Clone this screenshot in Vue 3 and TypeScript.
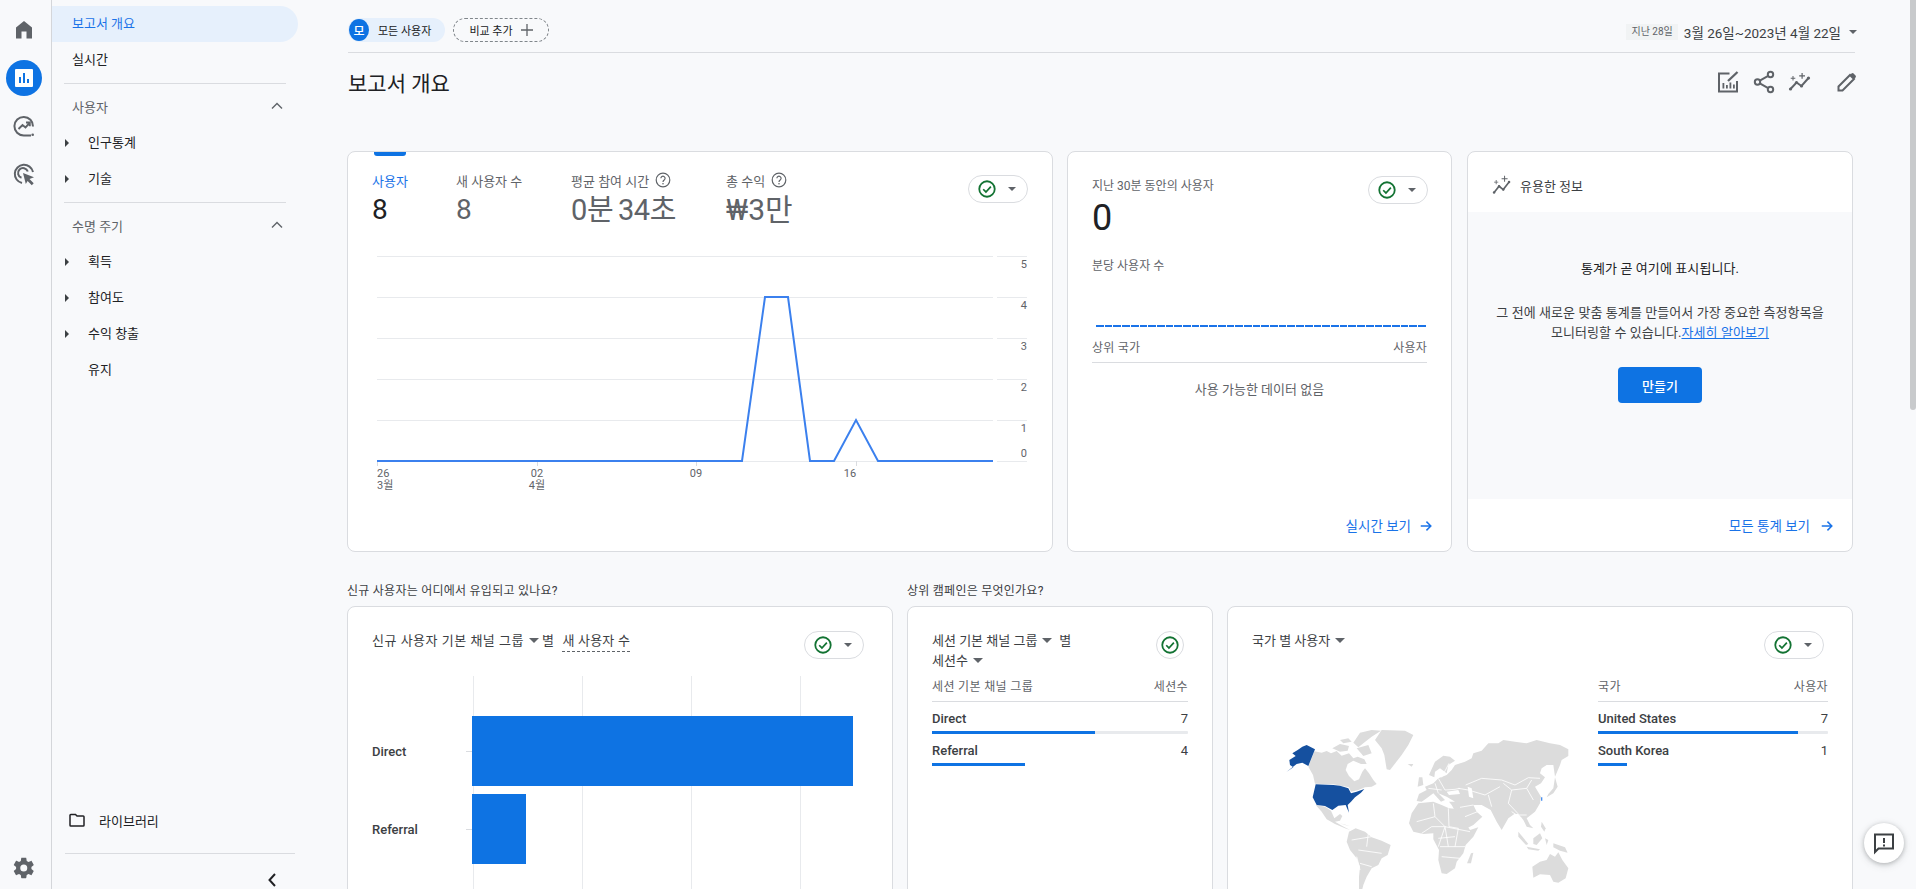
<script setup lang="ts">
const navA = ['인구통계', '기술']
const navB = ['획득', '참여도', '수익 창출']
const metrics = [
  { label: '사용자', value: '8', help: false, w: 84 },
  { label: '새 사용자 수', value: '8', help: false, w: 115 },
  { label: '평균 참여 시간', value: '0분 34초', help: true, w: 155 },
  { label: '총 수익', value: '₩3만', help: true, w: 100 },
]
const yLabels = [
  { t: '5', y: 12 }, { t: '4', y: 53 }, { t: '3', y: 94 }, { t: '2', y: 135 }, { t: '1', y: 176 }, { t: '0', y: 201 },
]
const grid = [0.5, 41.5, 82.5, 123.5, 164.5, 205.5]
const ticks = [1, 161, 320, 480]
const gridX = [124.5, 233.5, 342.5, 451.5]
const dashes = Array.from({ length: 38 }, (_, i) => i)
const chartBars = [
  { label: 'Direct', w: 381 },
  { label: 'Referral', w: 54 },
]
const sessionRows = [
  { label: 'Direct', value: 7, w: 163 },
  { label: 'Referral', value: 4, w: 93 },
]
const geoRows = [
  { label: 'United States', value: 7, w: 200 },
  { label: 'South Korea', value: 1, w: 29 },
]
const landPaths = [
  'M470 120 L540 122 L565 135 L550 165 L530 195 L495 240 L485 238 L478 195 L470 175 L450 150 Z',
  'M268 184 L290 188 L305 183 L318 190 L335 183 L350 197 L372 190 L385 205 L398 200 L418 208 L425 222 L408 222 L385 212 L368 222 L362 240 L372 258 L388 274 L402 268 L412 245 L420 235 L432 250 L445 270 L455 282 L440 290 L420 292 L400 300 L378 305 L372 292 L325 283 L270 281 L264 255 L250 230 Z',
  'M322 175 L345 162 L372 168 L368 182 L345 185 Z',
  'M345 150 L370 145 L380 155 L355 160 Z',
  'M385 158 L405 128 L440 120 L468 122 L440 140 L415 160 L400 172 Z',
  'M395 175 L430 165 L440 190 L415 198 Z',
  'M345 400 L375 408 L360 405 Z',
  'M272 345 L300 350 L318 362 L328 385 L345 372 L352 378 L345 392 L330 395 L352 408 L375 420 L360 415 L330 402 L305 388 L290 365 Z',
  'M372 425 L392 415 L420 425 L440 442 L470 452 L497 465 L488 495 L470 505 L460 525 L440 535 L425 560 L415 585 L412 597 L402 597 L402 560 L405 530 L395 505 L375 480 L365 455 Z',
  'M612 255 L630 215 L655 197 L675 200 L690 212 L670 225 L665 250 L645 235 L630 245 L628 262 Z',
  'M690 225 L720 215 L740 205 L745 190 L770 182 L790 160 L820 160 L835 150 L870 155 L905 160 L935 150 L975 160 L1005 165 L1030 178 L1030 198 L1010 210 L1005 225 L990 260 L985 225 L965 225 L950 235 L945 250 L960 262 L948 280 L930 290 L948 320 L945 340 L930 365 L905 385 L915 405 L925 415 L905 410 L895 390 L880 372 L868 372 L850 385 L830 420 L815 395 L797 360 L770 345 L745 345 L755 365 L772 380 L745 405 L720 418 L700 380 L680 345 L672 335 L690 335 L665 320 L640 310 L660 330 L648 335 L625 310 L605 325 L590 335 L575 333 L582 312 L605 300 L600 290 L625 280 L640 265 L665 255 L680 240 Z',
  'M582 262 L592 262 L595 285 L578 290 Z',
  'M548 222 L565 222 L560 230 Z',
  'M990 262 L998 290 L985 310 L965 322 L970 312 L985 295 Z',
  'M580 340 L625 335 L650 345 L672 355 L705 358 L712 385 L735 420 L760 412 L745 440 L722 465 L715 490 L695 515 L690 535 L665 552 L650 550 L640 510 L642 480 L625 448 L625 430 L595 432 L565 425 L552 400 L560 370 Z',
  'M738 490 L745 488 L738 520 L726 520 Z',
  'M922 530 L945 515 L965 510 L975 492 L990 500 L1000 487 L1012 510 L1030 535 L1022 565 L1000 578 L985 575 L975 555 L945 553 L925 563 Z',
  'M880 425 L910 462 L903 465 L880 440 Z',
  'M925 445 L945 430 L952 445 L935 465 L925 462 Z',
  'M905 470 L945 478 L940 482 L910 478 Z',
  'M985 460 L1020 472 L1028 488 L1005 482 L985 472 Z',
  'M950 395 L962 415 L958 425 L948 410 Z',
  'M960 445 L970 450 L965 465 Z',
]
const water = [
  'M665 305 L700 300 L705 312 L672 315 Z',
  'M728 290 L740 295 L745 325 L732 320 Z',
]
const borders = [
  'M722 285 L770 265 L830 270 L870 285 L910 263 L945 265',
  'M835 280 L860 300 L905 295 L920 270',
  'M700 295 L730 300 L780 315 L825 290',
  'M790 315 L800 350',
  'M860 300 L850 340 L880 372',
  'M905 295 L925 330',
  'M640 265 L660 300 L690 298 L705 295',
  'M610 295 L650 300',
  'M630 280 L640 310',
  'M672 220 L650 262',
  'M625 340 L630 380 L660 410 L640 470',
  'M670 355 L672 410 L700 415',
  'M575 395 L630 380',
  'M590 430 L620 410 L660 410',
  'M660 410 L735 425',
  'M645 470 L720 470',
  'M650 500 L705 505',
  'M640 445 L690 440',
  'M660 410 L670 470',
  'M700 415 L690 470',
  'M705 352 L745 345',
  'M720 380 L770 360',
  'M380 450 L440 440',
  'M400 480 L470 490',
  'M405 520 L440 530',
  'M395 500 L405 540',
  'M430 430 L425 470',
  'M860 365 L890 385',
  'M880 375 L905 375',
]
</script>

<template>
  <div class="page">
    <nav class="rail">
      <div class="rail-top">
        <span class="rail-btn">
          <svg viewBox="0 0 24 24" class="ic24"><path d="M4 20.500V9.500L12 3l8 6.500v11h-5.500v-7h-5v7z" fill="#5f6368" /></svg>
        </span>
        <span class="rail-btn active">
          <svg viewBox="0 0 24 24" class="ic24"><path d="M4 3h16a1 1 0 0 1 1 1v16a1 1 0 0 1-1 1H4a1 1 0 0 1-1-1V4a1 1 0 0 1 1-1zm3 8v6h2v-6zm4-4v10h2V7zm4 6v4h2v-4z" fill="#fff" fill-rule="evenodd" /></svg>
        </span>
        <span class="rail-btn">
          <svg viewBox="0 0 24 24" class="ic24"><g fill="none" stroke="#5f6368" stroke-width="2"><path d="M21 12.500A9.300 9.300 0 1 0 11.700 21.500H19" /><path d="M6.500 15l4-4 3 2.500 4-4.500M14 8.500h3.800v3.800" stroke-width="1.900" /></g><circle cx="20.700" cy="20.700" r="1.300" fill="#5f6368" /></svg>
        </span>
        <span class="rail-btn">
          <svg viewBox="0 0 24 24" class="ic24"><g fill="none" stroke="#5f6368" stroke-width="2"><path d="M10 21A9.200 9.200 0 1 1 21 10" /><path d="M9.500 15.800a5 5 0 1 1 6.300-6.300" /></g><path d="M11 11l11 4.200-4.500 1.900 4.200 4.200-1.900 1.900-4.200-4.200L13.800 22z" fill="#5f6368" /></svg>
        </span>
      </div>
      <span class="rail-btn">
        <svg viewBox="0 0 24 24" class="ic24"><path fill="#5f6368" d="M19.400 13c.04-.33.06-.66.06-1s-.02-.67-.07-1l2.160-1.700c.2-.15.25-.42.12-.65l-2.050-3.550c-.12-.22-.39-.3-.62-.22l-2.550 1.030c-.53-.4-1.100-.74-1.730-1L14.300 2.200c-.04-.24-.25-.42-.5-.42H9.700c-.25 0-.46.18-.5.42l-.4 2.700c-.62.26-1.200.6-1.730 1L4.520 4.870c-.23-.09-.5 0-.62.22L1.850 8.650c-.13.22-.08.5.12.65L4.130 11c-.05.33-.08.67-.08 1s.03.67.07 1l-2.160 1.700c-.2.15-.25.42-.12.65l2.050 3.550c.12.22.39.3.62.22l2.550-1.030c.53.4 1.100.74 1.730 1l.4 2.700c.04.24.25.42.5.42h4.100c.25 0 .46-.18.5-.42l.4-2.700c.62-.26 1.200-.6 1.730-1l2.550 1.030c.23.09.5 0 .62-.22l2.050-3.550c.13-.22.08-.5-.12-.65zM11.750 15.500a3.500 3.500 0 1 1 0-7 3.500 3.500 0 0 1 0 7z" /></svg>
      </span>
    </nav>

    <aside class="side">
      <div class="side-item current">보고서 개요</div>
      <div class="side-item">실시간</div>
      <div class="side-rule"></div>
      <div class="side-head">
        <span>사용자</span>
        <svg viewBox="0 0 12 8" class="chev"><path d="M1 6.500l5-5 5 5" fill="none" stroke="#5f6368" stroke-width="1.400" /></svg>
      </div>
      <div v-for="n in navA" :key="n" class="side-sub"><i class="tri"></i>{{ n }}</div>
      <div class="side-rule"></div>
      <div class="side-head">
        <span>수명 주기</span>
        <svg viewBox="0 0 12 8" class="chev"><path d="M1 6.500l5-5 5 5" fill="none" stroke="#5f6368" stroke-width="1.400" /></svg>
      </div>
      <div v-for="n in navB" :key="n" class="side-sub"><i class="tri"></i>{{ n }}</div>
      <div class="side-sub">유지</div>
      <div class="side-spacer"></div>
      <div class="side-lib">
        <svg viewBox="0 0 16 14" class="folder"><path d="M1 3V12.200a.8.8 0 0 0 .8.8h12.400a.8.8 0 0 0 .8-.8V3.800a.8.8 0 0 0-.8-.8H8L6.500 1.500H1.800A.8.8 0 0 0 1 2.300z" fill="none" stroke="#202124" stroke-width="1.500" /></svg>
        <span>라이브러리</span>
      </div>
      <div class="side-foot">
        <svg viewBox="0 0 8 14" class="collapse"><path d="M7 1L1.500 7 7 13" fill="none" stroke="#202124" stroke-width="2" /></svg>
      </div>
    </aside>

    <main class="main">
      <header class="top">
        <div class="chip-all"><b class="avatar">모</b><span>모든 사용자</span></div>
        <div class="chip-add"><span>비교 추가</span>
          <svg viewBox="0 0 12 12" class="plus"><path d="M6 0v12M0 6h12" stroke="#5f6368" stroke-width="1.300" /></svg>
        </div>
        <div class="date">
          <span class="badge">지난 28일</span>
          <span class="range">3월 26일~2023년 4월 22일</span>
          <i class="caret"></i>
        </div>
      </header>

      <div class="title-row">
        <h1>보고서 개요</h1>
        <div class="tools">
          <svg viewBox="0 0 24 24" class="tool t1"><path d="M13.500 3.500H3v18h18V11" fill="none" stroke="#5f6368" stroke-width="2" /><path d="M6.500 13h1.800v5.500H6.500zM10 15h1.800v3.500H10zM13.500 12.500h1.800v6h-1.800zM17 14.500h1.800v4H17z" fill="#5f6368" /><path d="M12 11l9.500-9" stroke="#5f6368" stroke-width="2.300" /></svg>
          <svg viewBox="0 0 24 24" class="tool t2"><g fill="none" stroke="#5f6368" stroke-width="2"><circle cx="18.500" cy="4.500" r="2.700" /><circle cx="5.500" cy="12" r="2.700" /><circle cx="18.500" cy="19.500" r="2.700" /><path d="M16.200 5.800L7.800 10.700M7.800 13.300l8.400 4.900" /></g></svg>
          <svg viewBox="0 0 24 24" class="tool t3"><path d="M2.500 19l6-6.500 5 3.500 7-8" fill="none" stroke="#5f6368" stroke-width="2" /><g fill="#5f6368"><circle cx="2.500" cy="19" r="1.600" /><circle cx="8.500" cy="12.500" r="1.600" /><circle cx="13.500" cy="16" r="1.600" /><circle cx="20.500" cy="8" r="1.600" /><path d="M13.500 3h1.200v2.300H17v1.200h-2.300v2.300h-1.200V6.500h-2.300V5.300h2.300zM4.500 6h1v1.800h1.800v1H5.500v1.800h-1V8.800H2.700v-1h1.800z" /></g></svg>
          <svg viewBox="0 0 24 24" class="tool t4"><path d="M3.500 20.500V16.500L15 5l4 4L7.500 20.500z" fill="none" stroke="#5f6368" stroke-width="2" /><path d="M16.500 3.500a1.500 1.500 0 0 1 2.100 0l1.900 1.900a1.500 1.500 0 0 1 0 2.100L19 9l-4-4z" fill="#5f6368" /></svg>
        </div>
      </div>

      <section class="row-one">
        <article class="card c-main">
          <span class="tab-mark"></span>
          <div class="metrics">
            <div v-for="m in metrics" :key="m.label" class="metric" :style="{ width: m.w + 'px' }">
              <div class="m-label">
                <span>{{ m.label }}</span>
                <svg v-if="m.help" viewBox="0 0 16 16" class="help"><circle cx="8" cy="8" r="6.800" fill="none" stroke="#5f6368" stroke-width="1.200" /><path d="M5.900 6.300a2.100 2.100 0 1 1 3.300 1.700c-.8.550-1.200.9-1.200 1.900" fill="none" stroke="#5f6368" stroke-width="1.200" /><circle cx="8" cy="11.800" r=".8" fill="#5f6368" /></svg>
              </div>
              <div class="m-value">{{ m.value }}</div>
            </div>
            <button class="cmp metric-cmp">
              <svg viewBox="0 0 20 20" class="chk"><circle cx="10" cy="10" r="8.600" fill="none" stroke="#137333" stroke-width="2" /><path d="M5.800 10.300l3 3 5.500-6" fill="none" stroke="#137333" stroke-width="1.900" /></svg>
              <i class="caret small"></i>
            </button>
          </div>
          <div class="chart">
            <svg class="line-svg" viewBox="0 0 652 240" width="652" height="240">
              <g stroke="#e8eaed" stroke-width="1">
                <template v-for="g in grid" :key="g">
                  <line x1="0" x2="616" :y1="g" :y2="g" />
                  <line x1="620" x2="650" :y1="g" :y2="g" />
                </template>
                <line v-for="t in ticks" :key="t" :x1="t - 0.5" :x2="t - 0.5" y1="205" y2="210" stroke="#dadce0" />
              </g>
              <polyline points="0,205 365,205 388,41 411,41 433,205 457,205 479,164 501,205 616,205" fill="none" stroke="#3b80ee" stroke-width="2" />
              <text v-for="y in yLabels" :key="y.t" x="650" :y="y.y" text-anchor="end" class="axis">{{ y.t }}</text>
              <text x="0" y="221" class="axis">26</text>
              <text x="0" y="233" class="axis">3월</text>
              <text x="160" y="221" class="axis" text-anchor="middle">02</text>
              <text x="160" y="233" class="axis" text-anchor="middle">4월</text>
              <text x="319" y="221" class="axis" text-anchor="middle">09</text>
              <text x="473" y="221" class="axis" text-anchor="middle">16</text>
            </svg>
          </div>
        </article>

        <article class="card c-live">
          <div class="live-head">
            <div>
              <div class="live-title">지난 30분 동안의 사용자</div>
              <div class="live-num">0</div>
            </div>
            <button class="cmp live-cmp">
              <svg viewBox="0 0 20 20" class="chk"><circle cx="10" cy="10" r="8.600" fill="none" stroke="#137333" stroke-width="2" /><path d="M5.800 10.300l3 3 5.500-6" fill="none" stroke="#137333" stroke-width="1.900" /></svg>
              <i class="caret small"></i>
            </button>
          </div>
          <div class="live-sub">분당 사용자 수</div>
          <div class="live-bars"><i v-for="d in dashes" :key="d"></i></div>
          <div class="tbl-head live-tbl"><span>상위 국가</span><span>사용자</span></div>
          <div class="nodata">사용 가능한 데이터 없음</div>
          <a class="foot-link live-foot">실시간 보기
            <svg viewBox="0 0 16 16" class="arrow"><path d="M2 8h11M8.500 3l5 5-5 5" fill="none" stroke="#1a73e8" stroke-width="1.700" /></svg>
          </a>
        </article>

        <article class="card c-ins">
          <div class="ins-head">
            <svg viewBox="0 0 24 24" class="ins-ic"><path d="M2.500 21l6-7.500 5 4 7-9" fill="none" stroke="#5f6368" stroke-width="2" /><g fill="#5f6368"><circle cx="2.500" cy="21" r="1.500" /><circle cx="8.500" cy="13.500" r="1.500" /><circle cx="13.500" cy="17.500" r="1.500" /><circle cx="20.500" cy="8.500" r="1.500" /><path d="M14.500 1h1.200v3h3v1.200h-3v3h-1.200v-3h-3V4h3zM4.500 6h1v2h2v1h-2v2h-1V9h-2V8h2z" /></g></svg>
            <span>유용한 정보</span>
          </div>
          <div class="ins-body">
            <p class="ins-lead">통계가 곧 여기에 표시됩니다.</p>
            <p class="ins-text">그 전에 새로운 맞춤 통계를 만들어서 가장 중요한 측정항목을<br />모니터링할 수 있습니다.<a>자세히 알아보기</a></p>
            <button class="create">만들기</button>
          </div>
          <a class="foot-link ins-foot">모든 통계 보기
            <svg viewBox="0 0 16 16" class="arrow"><path d="M2 8h11M8.500 3l5 5-5 5" fill="none" stroke="#1a73e8" stroke-width="1.700" /></svg>
          </a>
        </article>
      </section>

      <section class="row-two">
        <div class="col c4">
          <h2>신규 사용자는 어디에서 유입되고 있나요?</h2>
          <article class="card tall">
            <div class="c-head">
              <div class="c-title">신규 사용자 기본 채널 그룹<i class="caret mid"></i><span class="by">별</span><span class="dash">새 사용자 수</span></div>
              <button class="cmp">
                <svg viewBox="0 0 20 20" class="chk"><circle cx="10" cy="10" r="8.600" fill="none" stroke="#137333" stroke-width="2" /><path d="M5.800 10.300l3 3 5.500-6" fill="none" stroke="#137333" stroke-width="1.900" /></svg>
                <i class="caret small"></i>
              </button>
            </div>
            <div class="bars">
              <i v-for="g in gridX" :key="g" class="vline" :style="{ left: g + 'px' }"></i>
              <div v-for="b in chartBars" :key="b.label" class="bar-row">
                <span class="bar-lab">{{ b.label }}</span>
                <i class="tick"></i>
                <b class="bar" :style="{ width: b.w + 'px' }"></b>
              </div>
            </div>
          </article>
        </div>

        <div class="col c5">
          <h2>상위 캠페인은 무엇인가요?</h2>
          <article class="card tall">
            <div class="c-head two-line">
              <div class="c-title">세션 기본 채널 그룹<i class="caret mid"></i><span class="by">별</span><br />세션수<i class="caret mid"></i></div>
              <button class="cmp round">
                <svg viewBox="0 0 20 20" class="chk"><circle cx="10" cy="10" r="8.600" fill="none" stroke="#137333" stroke-width="2" /><path d="M5.800 10.300l3 3 5.500-6" fill="none" stroke="#137333" stroke-width="1.900" /></svg>
              </button>
            </div>
            <div class="tbl">
              <div class="tbl-head"><span>세션 기본 채널 그룹</span><span>세션수</span></div>
              <template v-for="(r, i) in sessionRows" :key="r.label">
                <div class="tbl-row"><span class="strong">{{ r.label }}</span><span>{{ r.value }}</span></div>
                <div class="track" :class="{ none: i > 0 }"><i :style="{ width: r.w + 'px' }"></i></div>
              </template>
            </div>
          </article>
        </div>

        <div class="col c6">
          <h2>&nbsp;</h2>
          <article class="card tall geo">
            <div class="geo-left">
              <div class="c-title">국가 별 사용자<i class="caret mid"></i></div>
              <svg class="map" viewBox="0 0 1080 597" width="360" height="199">
                <g fill="#dcdcdc">
                  <path v-for="(p, i) in landPaths" :key="i" :d="p" />
                </g>
                <g fill="#fff">
                  <path v-for="(p, i) in water" :key="i" :d="p" />
                </g>
                <g fill="none" stroke="#fff" stroke-width="2.500">
                  <path v-for="(p, i) in borders" :key="i" :d="p" />
                </g>
                <path fill="#15509f" d="M232 170 L245 165 L270 178 L250 228 L232 218 L215 222 L185 245 L205 232 L195 225 L193 210 L212 198 L202 190 L218 180 Z" />
                <path fill="#15509f" d="M272 283 L325 285 L345 287 L370 295 L378 310 L395 305 L418 297 L408 308 L390 322 L378 335 L368 345 L372 368 L362 345 L340 347 L322 360 L300 348 L275 345 L263 322 Z" />
                <path fill="#4a90f0" d="M948 322h4v10h-4z" />
              </svg>
            </div>
            <div class="geo-right">
              <button class="cmp self-end">
                <svg viewBox="0 0 20 20" class="chk"><circle cx="10" cy="10" r="8.600" fill="none" stroke="#137333" stroke-width="2" /><path d="M5.800 10.300l3 3 5.500-6" fill="none" stroke="#137333" stroke-width="1.900" /></svg>
                <i class="caret small"></i>
              </button>
              <div class="tbl">
                <div class="tbl-head"><span>국가</span><span>사용자</span></div>
                <template v-for="(r, i) in geoRows" :key="r.label">
                  <div class="tbl-row"><span class="strong">{{ r.label }}</span><span>{{ r.value }}</span></div>
                  <div class="track" :class="{ none: i > 0 }"><i :style="{ width: r.w + 'px' }"></i></div>
                </template>
              </div>
            </div>
          </article>
        </div>
      </section>
    </main>

    <button class="feedback">
      <svg viewBox="0 0 24 24" width="24" height="24"><path d="M3 3.500h18v14H6.500L3 21z" fill="none" stroke="#3c4043" stroke-width="2" /><path d="M11 7h2v5h-2zM11 13.500h2v2h-2z" fill="#3c4043" /></svg>
    </button>
    <div class="scroll-thumb"></div>
  </div>
</template>

<style>
html, body { margin: 0; height: 100%; overflow: hidden; background: #f8f9fb; }
</style>

<style scoped>
.page {
  display: flex;
  width: 1916px;
  height: 889px;
  overflow: hidden;
  position: relative;
  background: #f8f9fb;
  color: #3c4043;
  font-family: Roboto, "Noto Sans CJK KR", sans-serif;
  font-size: 13px;
}
.rail {
  width: 52px;
  height: 889px;
  flex: none;
  border-right: 1px solid #d4d6da;
  display: flex;
  flex-direction: column;
  justify-content: space-between;
  align-items: center;
  padding: 12px 3px 3px 0;
  box-sizing: border-box;
}
.rail-top { display: flex; flex-direction: column; gap: 12px; }
.rail-btn { width: 36px; height: 36px; border-radius: 50%; display: flex; align-items: center; justify-content: center; }
.rail-btn.active { background: #0e73e3; }
.ic24 { width: 24px; height: 24px; }

.side {
  width: 246px;
  flex: none;
  height: 889px;
  display: flex;
  flex-direction: column;
  padding-top: 6px;
  box-sizing: border-box;
  color: #202124;
}
.side-item { height: 36px; line-height: 36px; padding-left: 20px; }
.current { background: #e6f0fc; color: #1a73e8; border-radius: 0 18px 18px 0; }
.side-rule { height: 1px; width: 222px; background: #dadce0; margin: 5px 12px 0; flex: none; }
.side-head {
  height: 44px;
  margin-bottom: -3px;
  display: flex;
  align-items: center;
  justify-content: space-between;
  padding: 0 15px 0 20px;
  color: #5f6368;
  box-sizing: border-box;
  flex: none;
}
.chev { width: 12px; height: 8px; }
.side-sub { height: 36px; line-height: 36px; padding-left: 36px; position: relative; flex: none; }
.tri {
  position: absolute;
  left: 13px;
  top: 14px;
  border-left: 4px solid #3c4043;
  border-top: 4px solid transparent;
  border-bottom: 4px solid transparent;
}
.side-spacer { flex: 1; }
.side-lib {
  display: flex;
  align-items: center;
  height: 36px;
  padding-left: 17px;
  gap: 14px;
  margin-bottom: 15px;
}
.folder { width: 16px; height: 14px; }
.side-foot {
  height: 36px;
  margin-left: 13px;
  width: 230px;
  border-top: 1px solid #dadce0;
  display: flex;
  justify-content: flex-end;
  align-items: flex-end;
  padding: 0 19px 2px 0;
  box-sizing: border-box;
}
.collapse { width: 8px; height: 14px; }

.main { flex: 1; min-width: 0; padding: 0 63px 0 49px; box-sizing: border-box; }
.top {
  height: 53px;
  border-bottom: 1px solid #dadce0;
  display: flex;
  align-items: center;
  padding-top: 8px;
  box-sizing: border-box;
  margin: 0 -2px 0 1px;
}
.chip-all {
  height: 24px;
  width: 97px;
  box-sizing: border-box;
  background: #e6f0fc;
  border-radius: 12px;
  display: flex;
  align-items: center;
  gap: 9px;
  font-size: 11px;
  color: #202124;
}
.avatar {
  width: 20px;
  height: 22px;
  border-radius: 50%;
  background: #0e73e3;
  color: #fff;
  font-weight: 500;
  font-size: 12px;
  display: flex;
  align-items: center;
  justify-content: center;
  margin-left: 1px;
}
.chip-add {
  margin-left: 8px;
  height: 24px;
  width: 96px;
  box-sizing: border-box;
  border: 1px dashed #80868b;
  border-radius: 12px;
  display: flex;
  align-items: center;
  justify-content: center;
  gap: 8px;
  font-size: 11px;
  color: #202124;
}
.plus { width: 12px; height: 12px; }
.date { margin-left: auto; margin-top: 3px; display: flex; align-items: center; color: #3c4043; }
.badge {
  background: #f1f3f4;
  font-size: 10px;
  line-height: 16px;
  padding: 0 5px;
  color: #5f6368;
  margin-right: 6px;
}
.range { font-size: 13.500px; }
.caret {
  display: inline-block;
  border-left: 4.500px solid transparent;
  border-right: 4.500px solid transparent;
  border-top: 4.500px solid #5f6368;
  margin-left: 8px;
  margin-right: -2px;
}
.caret.small { border-left-width: 4px; border-right-width: 4px; border-top-width: 4px; margin: 0; }
.caret.mid { border-left-width: 5px; border-right-width: 5px; border-top-width: 5px; margin: 0 7px 2px 5px; vertical-align: middle; }

.title-row { height: 98px; display: flex; justify-content: space-between; padding-top: 16px; box-sizing: border-box; }
h1 { margin: 0 0 0 1px; font-size: 21px; font-weight: 400; color: #202124; line-height: 30px; }
.tools { display: flex; height: 24px; align-items: center; margin: 1px -6px 0 0; gap: 12px; }
.tool { width: 24px; height: 24px; }
.t3 { margin-right: 11px; }

.row-one { display: flex; gap: 14px; }
.card {
  background: #fff;
  border: 1px solid #dadce0;
  border-radius: 8px;
  box-sizing: border-box;
  position: relative;
}
.c-main { width: 706px; height: 401px; padding: 0 24px; }
.tab-mark { position: absolute; left: 26px; top: 0; width: 32px; height: 4px; background: #0e73e3; border-radius: 0 0 3px 3px; }
.metrics { display: flex; padding-top: 18px; height: 85px; box-sizing: border-box; }
.metric { flex: none; color: #5f6368; }
.m-label { font-size: 13px; height: 20px; display: flex; align-items: center; gap: 6px; }
.m-value { font-size: 30px; line-height: 36px; margin-top: 2px; }
.metric:nth-child(-n + 2) .m-value { font-size: 28px; }
.metric:nth-child(3) .m-value { letter-spacing: -0.4px; word-spacing: -2px; font-size: 29px; }
.metric:first-child .m-label { color: #1a73e8; }
.metric:first-child .m-value { color: #202124; }
.help { width: 16px; height: 16px; }
.cmp {
  width: 60px;
  height: 28px;
  border-radius: 14px;
  border: 1px solid #dadce0;
  background: #fff;
  padding: 0 11px 0 9px;
  display: flex;
  align-items: center;
  justify-content: space-between;
  box-sizing: border-box;
  flex: none;
}
.metric-cmp { margin: 5px 0 0 auto; }
.chk { width: 18px; height: 18px; }
.chart { margin: 19px 0 0 5px; }
.line-svg { display: block; overflow: visible; }
.axis { font: 11px Roboto, "Noto Sans CJK KR", sans-serif; fill: #5f6368; }

.c-live { width: 385px; height: 401px; padding: 0 24px; display: flex; flex-direction: column; }
.live-head { display: flex; justify-content: space-between; padding-top: 24px; height: 90px; box-sizing: border-box; flex: none; }
.live-cmp { margin-right: -1px; }
.live-title { font-size: 12px; color: #5f6368; line-height: 20px; }
.live-num { font-size: 36px; color: #202124; line-height: 44px; }
.live-sub { font-size: 12px; color: #5f6368; margin-top: 14px; line-height: 20px; }
.live-bars { margin-top: 49px; display: flex; gap: 1px; padding: 0 1px 0 4px; height: 2px; flex: none; }
.live-bars i { flex: 1; background: #1a73e8; height: 2px; }
.tbl-head {
  display: flex;
  justify-content: space-between;
  font-size: 12px;
  letter-spacing: 0.35px;
  color: #5f6368;
  height: 31px;
  padding-bottom: 2px;
  align-items: center;
  border-bottom: 1px solid #dadce0;
  box-sizing: border-box;
}
.live-tbl { margin-top: 5px; flex: none; letter-spacing: 0.2px; }
.nodata { text-align: center; color: #5f6368; font-size: 13px; margin-top: 16px; }
.foot-link {
  display: flex;
  align-items: center;
  align-self: flex-end;
  gap: 10px;
  color: #1a73e8;
  font-size: 13.500px;
  line-height: 20px;
  margin-top: auto;
  margin-bottom: 15px;
}
.live-foot { margin-right: -6px; gap: 8px; }
.arrow { width: 14px; height: 14px; }

.c-ins { width: 386px; height: 401px; margin-left: 1px; overflow: hidden; display: flex; flex-direction: column; }
.ins-head {
  height: 60px;
  display: flex;
  align-items: center;
  gap: 8px;
  padding: 6px 0 0 24px;
  box-sizing: border-box;
  flex: none;
}
.ins-ic { width: 20px; height: 20px; }
.ins-body {
  height: 287px;
  flex: none;
  background: #f8f9fb;
  text-align: center;
  padding-top: 47px;
  box-sizing: border-box;
}
.ins-lead { margin: 0; line-height: 20px; color: #202124; font-weight: 400; letter-spacing: 0.1px; }
.ins-text { margin: 24px 0 0; line-height: 20px; letter-spacing: 0.08px; }
.ins-text a { color: #1a73e8; text-decoration: underline; }
.create {
  display: block;
  margin: 24px auto 0;
  width: 84px;
  height: 36px;
  background: #0e73e3;
  color: #fff;
  border: 0;
  border-radius: 4px;
  font: 500 13px Roboto, "Noto Sans CJK KR", sans-serif;
}
.ins-foot { margin-right: 18px; }

.row-two { display: flex; gap: 14px; margin-top: 31px; }
h2 { margin: 0 0 7px; font-size: 12px; letter-spacing: 0.25px; font-weight: 400; line-height: 16px; color: #3c4043; }
.c4 { width: 546px; flex: none; }
.c5 { width: 306px; flex: none; }
.c6 { width: 626px; flex: none; }
.tall { height: 320px; padding: 24px; overflow: hidden; }
.c-head { display: flex; justify-content: space-between; align-items: flex-start; margin-right: 4px; }
.c-title { font-size: 13px; color: #3c4043; line-height: 20px; }
.c4 .c-title { letter-spacing: 0.5px; }
.c4 .caret.mid { margin-right: 3px; }
.by { margin-right: 8px; }
.dash { border-bottom: 1px dashed #5f6368; padding-bottom: 3px; letter-spacing: 0.2px; }
.bars {
  position: relative;
  margin: 17px -24px 0;
  height: 260px;
  padding: 36px 0 0 24px;
  box-sizing: border-box;
}
.vline { position: absolute; top: 0; bottom: 0; width: 1px; background: #e8eaed; }
.bar-row { height: 78px; display: flex; align-items: center; position: relative; }
.bar-lab { width: 94px; flex: none; font-weight: 500; font-size: 13px; color: #3c4043; }
.tick { width: 6px; height: 1px; background: #dadce0; flex: none; }
.bar { display: block; height: 70px; background: #0e73e3; flex: none; }

.two-line { margin-right: 0; height: 40px; }
.cmp.round { width: 28px; padding: 0; justify-content: center; margin-right: 4px; }
.tbl-row { display: flex; justify-content: space-between; height: 29px; padding-top: 4px; box-sizing: border-box; align-items: center; font-size: 13px; color: #3c4043; }
.strong { font-weight: 500; font-size: 13px; }
.track { height: 3px; background: #e8eaed; border-radius: 1px; }
.track i { display: block; height: 3px; background: #0e73e3; }
.track.none { background: transparent; }

.geo { display: flex; padding: 24px 24px 0 0; }
.geo-left { width: 370px; flex: none; }
.geo-left .c-title { margin-left: 24px; }
.map { display: block; margin: 39px 0 0 -3px; }
.geo-right { flex: 1; display: flex; flex-direction: column; }
.self-end { align-self: flex-end; margin-right: 4px; }
.geo-right .tbl { margin-top: 12px; }

.feedback {
  position: absolute;
  left: 1864px;
  top: 823px;
  width: 40px;
  height: 40px;
  border-radius: 50%;
  background: #fff;
  border: 0;
  padding: 0;
  display: flex;
  align-items: center;
  justify-content: center;
  box-shadow: 0 1px 4px rgba(60, 64, 67, 0.3), 0 2px 8px rgba(60, 64, 67, 0.15);
}
.scroll-thumb {
  position: absolute;
  right: 0;
  top: 0;
  width: 6px;
  height: 410px;
  background: #c8cacc;
  border-radius: 0 0 3px 3px;
}
</style>
